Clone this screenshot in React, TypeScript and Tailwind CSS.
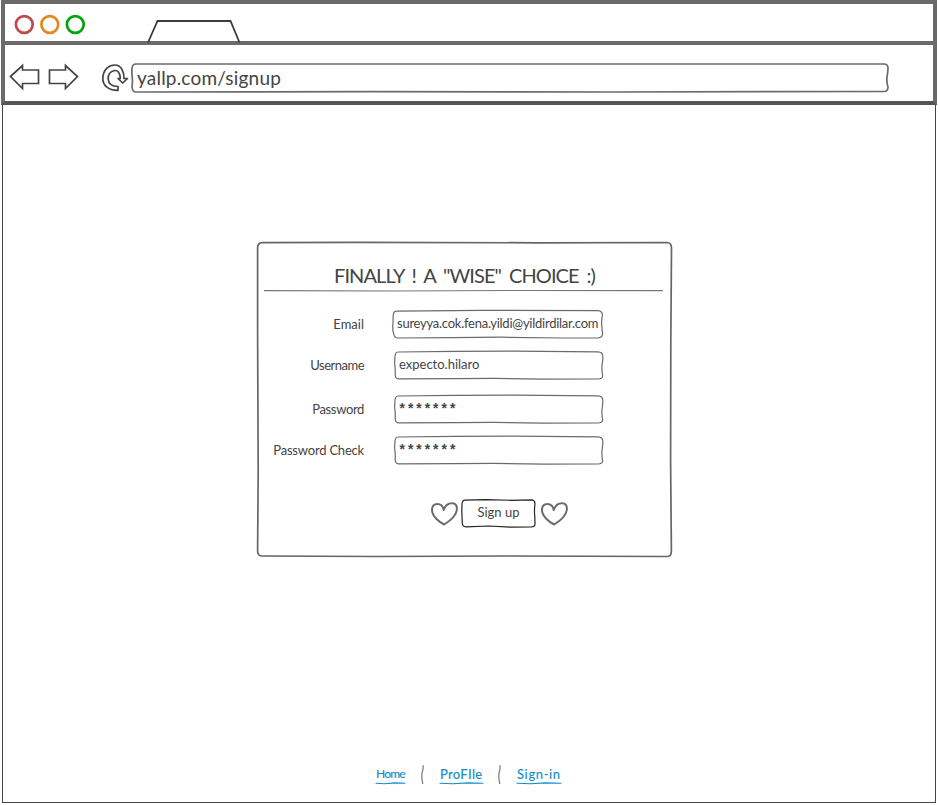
import type { ReactNode } from "react";

const stroke = { fill: "none", strokeLinecap: "round", strokeLinejoin: "round" } as const;

/* A box whose hand-drawn outline lies behind its content. */
function SketchBox({ w, h, d, color, width, className, children }: {
  w: number; h: number; d: string; color: string; width: number; className: string; children?: ReactNode;
}) {
  return (
    <div className={"relative shrink-0 " + className}>
      <svg className="absolute inset-0 overflow-visible" width={w} height={h} {...stroke} stroke={color} strokeWidth={width}>
        <path d={d} />
      </svg>
      {children}
    </div>
  );
}

const fieldPath =
  "M4 1 L60 .4 L120 .2 L204 .8 Q208.5 1 208.8 5 Q209 9 208 14 Q207.600 20 208.700 25 Q208.500 27.800 204 28 L150 28.200 L100 27.400 L60 27.600 L5 27.800 Q1.500 28 1.200 24 Q1.500 18 .6 12 L1 5 Q1.500 1 4 1";
const emailPath =
  "M5 1.200 L90 .4 L206 .6 Q210.300 1 210.500 5 Q209 12 210 18 L210.600 24 Q210.200 27.600 206 27.800 L170 28 L110 27.200 L60 27.600 L6 28 Q2 28 1.600 23 Q.2 20 1 13 L1.200 5 Q1.600 1.200 5 1.200";

function Row({ label, tracking, className, children }: { label: string; tracking: string; className: string; children: ReactNode }) {
  return (
    <div className={"flex h-[29px] " + className}>
      <label className={"mr-[30px] w-[107px] shrink-0 pt-[5px] text-right text-[13px] leading-[18px] whitespace-nowrap " + tracking}>{label}</label>
      {children}
    </div>
  );
}

function Heart() {
  return (
    <svg className="shrink-0" width="27" height="24" viewBox="0 0 27 24" {...stroke} stroke="#6b6b6b" strokeWidth="2">
      <path d="M13.200 22.500 C9 20.500 1 14.500 1 8 C1 4 3.500 2 6.500 2 C9.500 2 12 4 12.700 8 C14 4 17 1.200 21 1.200 C25 1.200 26.200 4 25.800 8 C25 15 18 19.500 13.200 22.500 Z" />
    </svg>
  );
}

function Separator() {
  return (
    <svg width="5" height="19" {...stroke} stroke="#777" strokeWidth="1.2">
      <path d="M3 .5 Q3.500 4 2 8 Q1.500 13 2.700 18.500" />
    </svg>
  );
}

function FooterLink({ className, w, children }: { className: string; w: number; children: string }) {
  return (
    <a className={"relative block shrink-0 whitespace-nowrap leading-[18px] font-medium text-[#138bcb] " + className}>
      {children}
      <svg className="absolute top-[17px] left-0 overflow-visible" width={w} height="3" {...stroke} stroke="#138bcb" strokeWidth="1.1">
        <path d={`M0 1.200 L${w * 0.3} 1.800 L${w * 0.65} .9 L${w} 1.300`} />
      </svg>
    </a>
  );
}

export default function App() {
  return (
    <div className="h-[805px] w-[938px] overflow-hidden bg-white font-['Lato','Open_Sans',sans-serif] text-[#444]">
      <header className="ml-px h-[105px] w-[936px] border-4 border-[#6a6a6a] border-b-[#555]">
        <div className="flex h-[41px] border-b-4 border-[#6a6a6a]">
          <svg className="ml-[9px]" width="75" height="37" fill="none" strokeWidth="2.7">
            <circle cx="10.300" cy="20.500" r="8.400" stroke="#bd4a4c" />
            <circle cx="35.800" cy="20.500" r="8.400" stroke="#df8b20" />
            <circle cx="61.300" cy="20.500" r="8.400" stroke="#03a30f" />
          </svg>
          <svg className="ml-[58px] overflow-visible" width="94" height="38" fill="none" stroke="#3c3c3c" strokeWidth="1.8">
            <path d="M1 38.500 L10.500 17 H83.500 L92.500 38.500" />
          </svg>
        </div>
        <nav className="flex h-[56px] pt-[18px]">
          <svg className="ml-[4px] shrink-0" width="72" height="30" fill="none" stroke="#444" strokeWidth="1.700">
            <path d="M1.500 13.500 L13.500 2.500 V7 H29.500 V20.500 H13.500 V25.500 Z" />
            <path d="M40.500 7 H56.500 V2.500 L68.500 13.500 L56.500 25.500 V20.500 H40.500 Z" />
          </svg>
          <svg className="ml-[20px] shrink-0" width="29" height="30" {...stroke} stroke="#444" strokeWidth="1.700">
            <path d="M17 27.300 C7 27.500 1.500 22 1.800 15 C2.500 6 8 2 14 2 C20 2 23 8 23 15.500 H26.500 L21.700 20 L17 15.500 H19.300 C19 10 17 7.200 13.500 7.500 C9 8.500 7 12 7.200 16 C7.500 21 11 23.500 17 23.500 Z" />
          </svg>
          <SketchBox w={758} h={30} color="#6b6b6b" width={1.7} className="ml-px h-[30px] w-[758px] pl-[6px]"
            d="M5 1 H753 Q757 1 757 5 Q757 9 756 14 Q755.500 20 757 24 Q757 28.500 753 28.500 L480 29 L240 28.600 L5 29 Q1.500 29 1 24 Q2 17 .8 11 L1 5 Q1.500 1 5 1">
            <div className="text-[19px] leading-[29px] tracking-[0.2px] whitespace-nowrap">yallp.com/signup</div>
          </SketchBox>
        </nav>
      </header>
      <main className="ml-[2px] flex h-[698px] w-[934px] flex-col border-x border-b border-[#444] pt-[137px]">
        <SketchBox w={416} h={316} color="#666" width={1.7} className="ml-[254px] h-[316px] w-[416px]"
          d="M5 .6 L100 .3 L280 .8 L410 .5 Q414.500 .6 414.500 6 L413.800 100 L413.600 220 L414.400 309 Q414.400 314.600 410 314.500 L250 314 L120 314.500 L5 314 Q.8 314 .6 309 L1.200 230 L.6 90 L.6 6 Q.8 .6 5 .6">
          <h1 className="h-[48px] pt-[20px] pl-[77px] text-[20px] leading-[26px] tracking-[-0.9px] [word-spacing:3.6px] whitespace-pre">FINALLY ! A "WISE" CHOICE :)</h1>
          <svg className="ml-[7px] block" width="400" height="2" stroke="#777" strokeWidth="1.1" fill="none">
            <path d="M0 .6 L130 1 L260 .5 L399 .6" />
          </svg>
          <form>
            <Row label="Email" tracking="tracking-normal" className="mt-[18px]">
              <SketchBox w={211} h={29} d={emailPath} color="#6b6b6b" width={1.2} className="-ml-[2px] h-[29px] w-[211px] pl-[5px]">
                <span className="block text-[13px] leading-[27px] tracking-[-0.25px] whitespace-nowrap">sureyya.cok.fena.yildi@yildirdilar.com</span>
              </SketchBox>
            </Row>
            <Row label="Username" tracking="tracking-[-0.5px]" className="mt-[12px]">
              <SketchBox w={209} h={29} d={fieldPath} color="#6b6b6b" width={1.2} className="h-[29px] w-[209px] pl-[5px]">
                <span className="block text-[13px] leading-[26px] whitespace-nowrap">expecto.hilaro</span>
              </SketchBox>
            </Row>
            <Row label="Password" tracking="tracking-[-0.35px]" className="mt-[15px]">
              <SketchBox w={209} h={29} d={fieldPath} color="#6b6b6b" width={1.2} className="h-[29px] w-[209px] pl-[4px]">
                <span className="block pt-[2px] font-['Liberation_Mono',monospace] text-[14px] leading-[26px] font-bold">*******</span>
              </SketchBox>
            </Row>
            <Row label="Password Check" tracking="tracking-[-0.2px]" className="mt-[12px]">
              <SketchBox w={209} h={29} d={fieldPath} color="#6b6b6b" width={1.2} className="h-[29px] w-[209px] pl-[4px]">
                <span className="block pt-[2px] font-['Liberation_Mono',monospace] text-[14px] leading-[26px] font-bold">*******</span>
              </SketchBox>
            </Row>
            <div className="mt-[34px] flex items-center pl-[174px]">
              <Heart />
              <SketchBox w={75} h={29} color="#222" width={1.2} className="mr-[5px] ml-[3px] h-[29px] w-[75px] text-center"
                d="M4 1.200 L25 .6 L50 1.300 L71 .8 Q74 1.200 74 5 Q73 12 73.800 17 L74 25 Q74 28 70 28 L50 28.200 L28 27 L5 27.800 Q1.500 27.800 1.300 24 L.8 12 L1 5 Q1.500 1.200 4 1.200">
                <span className="block text-[13px] leading-[27px]">Sign up</span>
              </SketchBox>
              <Heart />
            </div>
          </form>
        </SketchBox>
        <footer className="mt-[207px] flex items-start pl-[373px]">
          <FooterLink className="w-[29px] text-[12px] tracking-[-0.8px]" w={29}>Home</FooterLink>
          <div className="ml-[15px]"><Separator /></div>
          <FooterLink className="ml-[15px] w-[43px] text-[13px] tracking-[0.3px]" w={43}>ProFIle</FooterLink>
          <div className="ml-[14px]"><Separator /></div>
          <FooterLink className="ml-[15px] w-[44px] text-[13px] tracking-[0.6px]" w={44}>Sign-in</FooterLink>
        </footer>
      </main>
    </div>
  );
}
